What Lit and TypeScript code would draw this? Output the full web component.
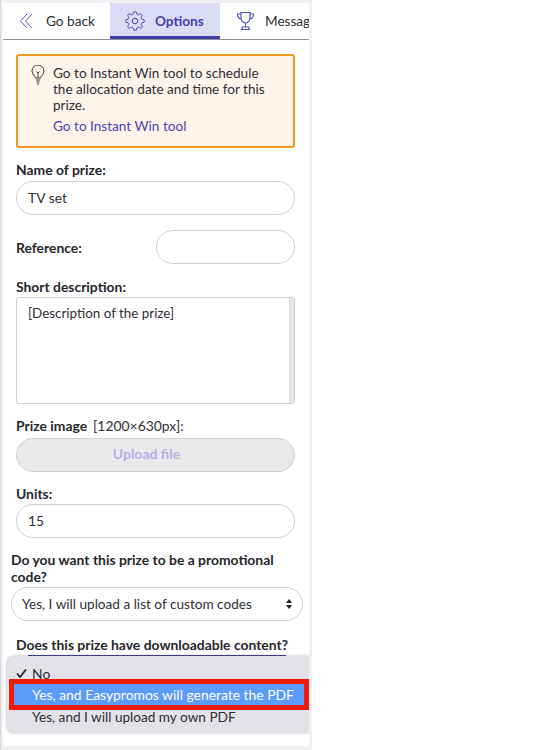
import { LitElement, html, css, svg } from "lit";
import { customElement } from "lit/decorators.js";

function gearPath(): string {
  const pts: string[] = [];
  for (let i = 0; i < 96; i++) {
    const t = (i / 96) * Math.PI * 2;
    const r = 8.1 + 1.3 * Math.tanh(2 * Math.cos(8 * t));
    pts.push(`${(10 + r * Math.sin(t)).toFixed(2)} ${(10 - r * Math.cos(t)).toFixed(2)}`);
  }
  return "M" + pts.join("L") + "Z";
}

@customElement("app-root")
export class AppRoot extends LitElement {
  static styles = css`
    :host { display: block; width: 547px; height: 750px; background: #fff; font-family: "Lato", "Open Sans", sans-serif; color: #2f2f36; overflow: hidden; position: relative; }
    * { box-sizing: border-box; }
    .panel { width: 312px; height: 750px; background: #f1f1f3; padding: 3px 3px 0 2px; border-left: 1px solid #d8d8dc; }
    .inner { width: 306px; height: 743px; background: #fff; overflow: hidden; position: relative; }
    .tabs { display: flex; height: 37px; border-bottom: 1px solid #8e8e93; white-space: nowrap; overflow: hidden; }
    .tab { display: flex; align-items: center; font-size: 13.6px; height: 36px; flex: none; }
    .back { width: 107px; padding-left: 16px; gap: 11px; }
    .opts { width: 110px; background: #dcdcf5; border-bottom: 3px solid #3f3fa8; color: #4141b0; font-weight: 700; padding-left: 15px; gap: 10px; padding-top: 3px; }
    .msg { padding-left: 16px; gap: 10px; }
    .content { padding: 14px 14px 0 13px; }
    .note { border: 2px solid #ee9b22; border-radius: 3px; background: #fff4ea; padding: 9px 15px 9px 13px; display: flex; gap: 8px; height: 94px; font-size: 13.6px; line-height: 16px; }
    .note a { color: #4a44b4; display: block; margin-top: 5px; }
    .label { font-size: 13.9px; font-weight: 700; line-height: 17px; color: #26262c; }
    .input { height: 34px; border: 1px solid #cfcfd3; border-radius: 17px; background: #fff; font-size: 13.9px; display: flex; align-items: center; padding: 0 0 1px 11px; }
    .f1 { margin-top: 13px; }
    .f1 .input { margin-top: 3px; }
    .row { display: flex; justify-content: space-between; align-items: center; margin-top: 15px; }
    .row .input { width: 139px; }
    .sd { margin-top: 14px; }
    .ta { margin-top: 2px; height: 107px; border: 1px solid #cfcfd3; border-radius: 3px; padding: 7px 11px; font-size: 13.4px; line-height: 16px; position: relative; }
    .bar { position: absolute; right: 0; top: 0; bottom: 0; width: 5px; background: #e6e6e8; }
    .pi { margin-top: 13px; display: flex; gap: 6px; }
    .pi span { font-size: 13.9px; line-height: 17px; }
    .upload { margin-top: 4px; height: 34px; border: 1px solid #d2d2d4; border-radius: 17px; background: #e9e9ea; color: #b4b2e2; font-size: 14px; font-weight: 700; display: flex; align-items: center; justify-content: center; padding: 0 18px 3px 0; }
    .units { margin-top: 13px; }
    .units .input { margin-top: 2px; }
    .out { margin: 13px -8px 0 -5px; }
    .sel { margin-top: 2px; height: 34px; border: 1px solid #cfcfd3; border-radius: 17px; font-size: 13.6px; display: flex; align-items: center; justify-content: space-between; padding: 0 10px 1px 10px; }
    .dl { margin-top: 15px; white-space: nowrap; }
    .menu { position: absolute; left: 4px; top: 653px; width: 305px; height: 77px; background: #e2e2e8; border-radius: 7px; box-shadow: 0 0 3px rgba(0,0,0,.3); font-size: 13.9px; padding-top: 6px; z-index: 2; }
    .line { position: absolute; left: 25px; top: 652px; width: 258px; height: 1px; background: #3a3a8c; z-index: 3; }
    .opt { height: 22px; display: flex; align-items: center; padding-left: 25px; position: relative; }
    .check { position: absolute; left: 9px; top: 7px; }
    .hl { background: #5b9bfb; color: #fff; outline: 5px solid #f01a0a; margin: 0 8px 1px 7px; padding-left: 18px; height: 21px; z-index: 1; }
    .last { font-size: 13.6px; }
  `;
  render() {
    return html`<div class="panel"><div class="inner">
      <div class="tabs">
        <div class="tab back"><svg width="16" height="16" viewBox="0 0 16 16" fill="none" stroke="#5a5ab8" stroke-width="1"><path d="M8 1 1.500 8 8 15M13 1 6.500 8 13 15"/></svg><span>Go back</span></div>
        <div class="tab opts"><svg width="20" height="20" viewBox="0 0 20 20" fill="none" stroke="#4141b0" stroke-width="1">${svg`<path d=${gearPath()}/>`}<circle cx="10" cy="10" r="2.800"/></svg><span>Options</span></div>
        <div class="tab msg"><svg width="19" height="20" viewBox="0 0 19 20" fill="none" stroke="#4a4ab0" stroke-width="1.100"><path d="M5 1.500h9v5c0 3-2 5.500-4.500 5.500S5 9.500 5 6.500zM5 3H1.500c0 3 1.500 5 4.300 5.500M14 3h3.500c0 3-1.500 5-4.300 5.500M9.500 12v4M6.500 16h6l1 2.500h-8z"/></svg><span>Messages</span></div>
      </div>
      <div class="content">
        <div class="note">
          <svg width="14" height="20" viewBox="0 0 14 20" fill="none" stroke="#3a3a40" stroke-width="1" style="flex:none"><path d="M4.500 13c0-2-3.500-3.500-3.500-7a6 6 0 0 1 12 0c0 3.500-3.500 5-3.500 7zM5 15h4M5.500 17h3M6 19h2M7 13V8L5.500 6.500M7 8l1.500-1.500"/></svg>
          <div>Go to Instant Win tool to schedule the allocation date and time for this prize.<a>Go to Instant Win tool</a></div>
        </div>
        <div class="f1"><div class="label">Name of prize:</div><div class="input">TV set</div></div>
        <div class="row"><div class="label">Reference:</div><div class="input"></div></div>
        <div class="sd"><div class="label">Short description:</div><div class="ta">[Description of the prize]<div class="bar"></div></div></div>
        <div class="pi"><div class="label">Prize image</div><span>[1200×630px]:</span></div>
        <div class="upload">Upload file</div>
        <div class="units"><div class="label">Units:</div><div class="input">15</div></div>
        <div class="out"><div class="label">Do you want this prize to be a promotional code?</div>
          <div class="sel"><span>Yes, I will upload a list of custom codes</span><svg width="6" height="10" viewBox="0 0 6 10" fill="#222"><path d="M3 0 6 4H0zM3 10 0 6h6z"/></svg></div></div>
        <div class="label dl">Does this prize have downloadable content?</div>
      </div>
      <div class="line"></div>
      <div class="menu">
        <div class="opt"><svg class="check" width="11" height="9" viewBox="0 0 11 9" fill="none" stroke="#222" stroke-width="1.700"><path d="M1 4.500 4 8l6-7.500"/></svg>No</div>
        <div class="opt hl">Yes, and Easypromos will generate the PDF</div>
        <div class="opt last">Yes, and I will upload my own PDF</div>
      </div>
    </div></div>`;
  }
}
